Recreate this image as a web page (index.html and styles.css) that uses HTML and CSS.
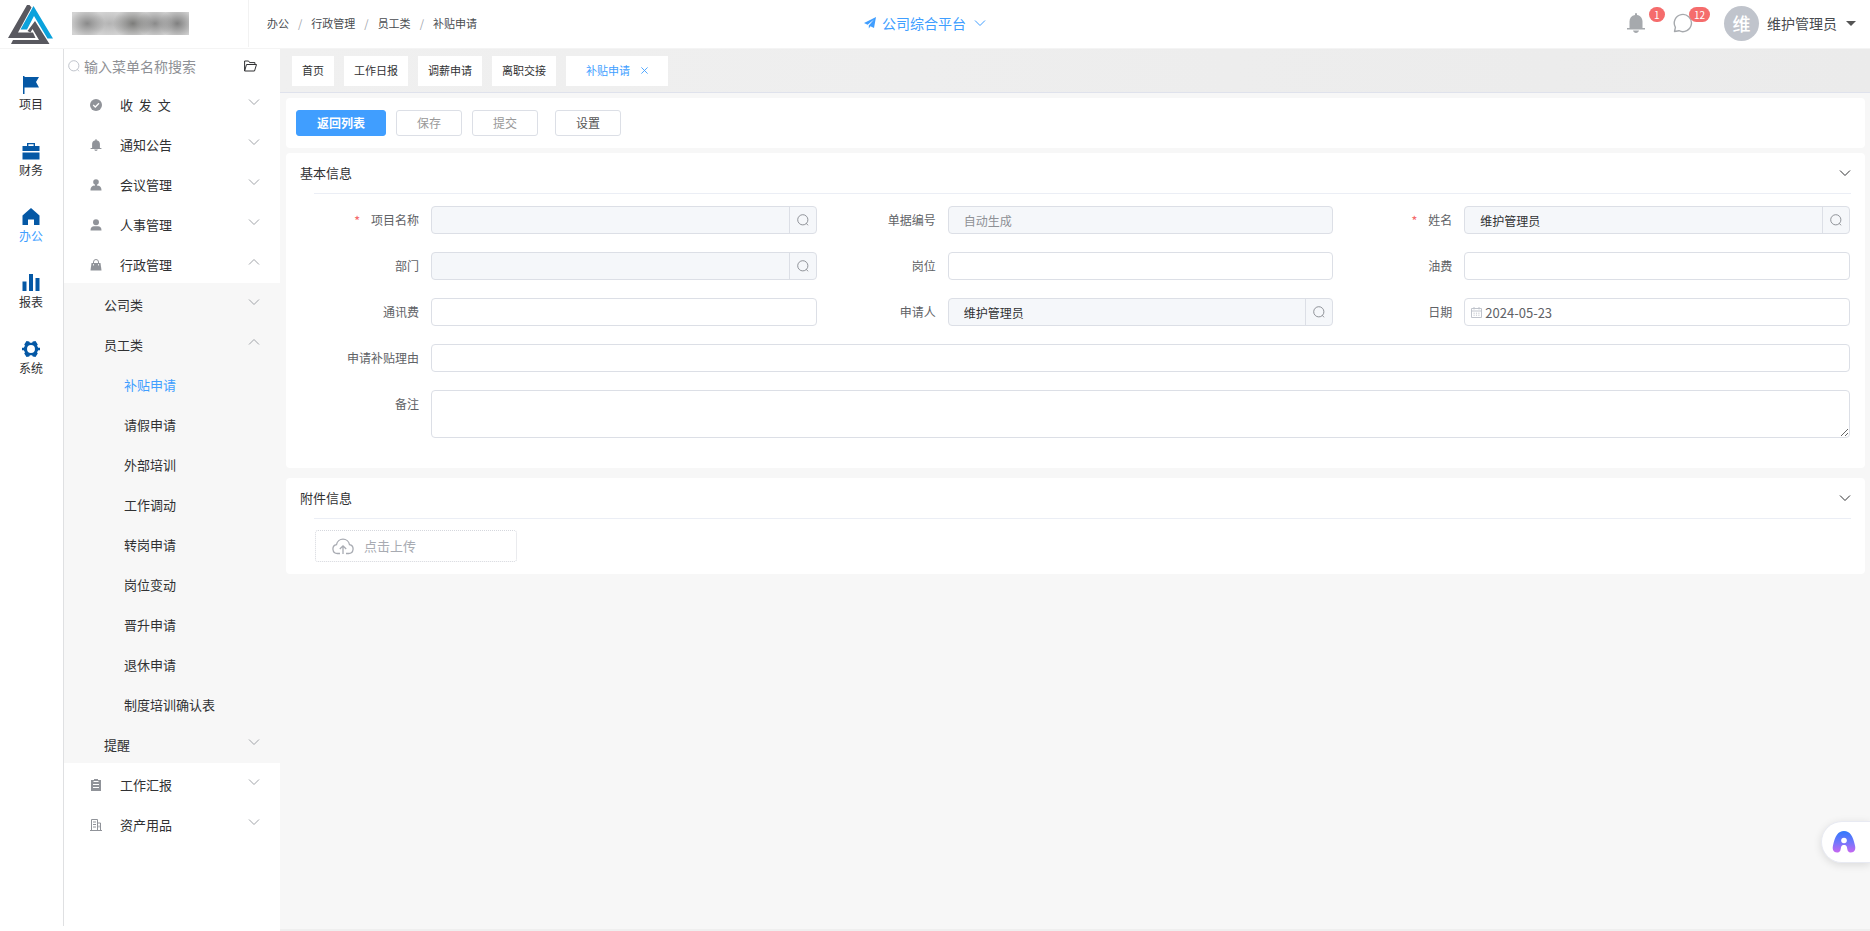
FILE: index.html
```html
<!DOCTYPE html>
<html lang="zh-CN">
<head>
<meta charset="utf-8">
<title>补贴申请</title>
<link rel="stylesheet" href="styles.css">
</head>
<body>
<svg class="defs" aria-hidden="true">
  <symbol id="i-down" viewBox="0 0 12 12"><path d="M1 3.5 6 8.5 11 3.5" fill="none" stroke="currentColor"/></symbol>
  <symbol id="i-up" viewBox="0 0 12 12"><path d="M1 8.5 6 3.5 11 8.5" fill="none" stroke="currentColor"/></symbol>
  <symbol id="i-search" viewBox="0 0 12 12"><circle cx="5.8" cy="5.8" r="5.1" fill="none" stroke="currentColor"/><path d="M9.2 9.2 11 11.300" stroke="currentColor"/></symbol>
  <symbol id="i-bell" viewBox="0 0 18 20"><path d="M8 2V1a1 1 0 0 1 2 0v1c3.600.6 5.500 3.200 5.500 6.500V15H18v1.600H0V15h2.500V8.500C2.500 5.200 4.400 2.600 8 2ZM6 17.600h6c-.4 1.400-1.500 2.400-3 2.400s-2.600-1-3-2.400Z" fill="currentColor"/></symbol>
</svg>
<header class="header">
  <a class="brand" href="#" aria-label="首页">
    <svg class="brand-logo" viewBox="0 0 45 40">
      <path d="M19 0h2.500L23.500 2.500 10 27.500h15l2.500 5.500H0Z" fill="#58585f"/>
      <path d="M27 16 41.500 39H3l2-4h26L24.500 24 22.500 27.500 19.500 26Z" fill="#58585f"/>
      <path d="M25.500 1 45 33.500h-5.500L26 11 19 24.500h-6.500Z" fill="#0ba2dc"/>
    </svg>
    <span class="brand-name"></span>
  </a>
  <nav class="crumbs" aria-label="路径"><span>办公</span><i>/</i><span>行政管理</span><i>/</i><span>员工类</span><i>/</i><span>补贴申请</span></nav>
  <button class="platform" type="button">
    <svg width="12" height="12" viewBox="0 0 12 12"><path d="M12 0 10 11 6.500 9.300 4.800 11.500V8.400L10 2.600 3.600 7.800 0 6Z" fill="currentColor"/></svg>
    公司综合平台
    <svg class="ic12"><use href="#i-down"/></svg>
  </button>
  <div class="user-area">
    <button class="notice" type="button" aria-label="通知"><svg width="18" height="20"><use href="#i-bell"/></svg><span class="badge">1</span></button>
    <button class="notice chat" type="button" aria-label="消息"><svg width="20" height="20" viewBox="0 0 20 20"><path d="M1.500 18.500 2.400 14.300A8.600 8.600 0 1 1 6 17.700Z" fill="none" stroke="currentColor" stroke-width="1.400" stroke-linejoin="round"/></svg><span class="badge">12</span></button>
    <button class="user" type="button"><span class="avatar">维</span>维护管理员<span class="caret"></span></button>
  </div>
</header>
<div class="body">
  <nav class="rail">
    <a href="#"><svg viewBox="0 0 18 18"><path d="M1 0h1.500v1H17l-3 5 3 5.500H2.500V18H1Z"/></svg>项目</a>
    <a href="#"><svg viewBox="0 0 18 18"><path d="M5 1h8v3h4.500v5H.5V4H5Zm1.400 1.300V4h5.200V2.300ZM.5 10.500h17v7H.5Z" fill-rule="evenodd"/></svg>财务</a>
    <a href="#" class="on"><svg viewBox="0 0 18 18"><path d="M9 0 17.500 7.500V17H12v-5.500H6V17H.5V7.500Z"/></svg>办公</a>
    <a href="#"><svg viewBox="0 0 18 18"><path d="M.5 7.500h4V17h-4ZM7 0h4v17H7Zm6.500 4h4v13h-4Z"/></svg>报表</a>
    <a href="#"><svg viewBox="0 0 20 18"><path d="M5 0 8 .6 8.800 2h2.400L12 .6 15 0l2.500 4-.8 1.500 1.300 2h2v3h-2l-1.300 2 .8 1.500-2.500 4-3-.6-.8-1.400H8.800L8 17.400 5 18 2.500 14l.8-1.500-1.300-2H0v-3h2l1.300-2L2.500 4Zm5 4.600a4.400 4.400 0 1 0 0 8.800 4.400 4.400 0 1 0 0-8.800Z" fill-rule="evenodd"/></svg>系统</a>
  </nav>
  <aside class="side">
    <div class="side-search">
      <svg class="ic12"><use href="#i-search"/></svg>
      <input type="text" aria-label="搜索菜单" placeholder="输入菜单名称搜索">
      <button type="button" aria-label="展开"><svg width="13" height="12" viewBox="0 0 13 12"><path d="M.6 11V1h4l1 1.600h5.300V4.500M.6 11 2.500 4.500h10L10.500 11Z" fill="none" stroke="#303133"/></svg></button>
    </div>
    <ul class="menu">
      <li><button type="button"><svg class="mi" viewBox="0 0 12 12"><circle cx="6" cy="6" r="6"/><path d="M3.200 6 5.300 8 9 4.200" fill="none" stroke="#fff" stroke-width="1.300"/></svg><span>收&nbsp; 发&nbsp; 文</span><svg class="chev"><use href="#i-down"/></svg></button></li>
      <li><button type="button"><svg class="mi"><use href="#i-bell"/></svg><span>通知公告</span><svg class="chev"><use href="#i-down"/></svg></button></li>
      <li><button type="button"><svg class="mi" viewBox="0 0 12 12"><circle cx="6" cy="3" r="2.800"/><path d="M5 5h2v1.500c3 .2 4.500 1.500 4.500 5H.5c0-3.500 1.500-4.800 4.500-5Z"/></svg><span>会议管理</span><svg class="chev"><use href="#i-down"/></svg></button></li>
      <li><button type="button"><svg class="mi" viewBox="0 0 12 12"><circle cx="6" cy="3.200" r="3"/><path d="M.5 11.500c0-3 1.500-4.300 3.500-4.300h4c2 0 3.500 1.300 3.500 4.300Z"/></svg><span>人事管理</span><svg class="chev"><use href="#i-down"/></svg></button></li>
      <li><button type="button"><svg class="mi" viewBox="0 0 12 12"><path d="M3.500 5V3a2.500 2.500 0 0 1 5 0v2" fill="none" stroke="currentColor"/><path d="M1.500 4h9l1 7.500H.5Z"/><path d="M3.500 5v1.500M8.500 5v1.500" stroke="#fff" stroke-width=".8"/></svg><span>行政管理</span><svg class="chev"><use href="#i-up"/></svg></button>
        <ul class="submenu">
          <li><button type="button"><span>公司类</span><svg class="chev"><use href="#i-down"/></svg></button></li>
          <li><button type="button"><span>员工类</span><svg class="chev"><use href="#i-up"/></svg></button>
            <ul class="leafs">
              <li><a href="#" class="on">补贴申请</a></li>
              <li><a href="#">请假申请</a></li>
              <li><a href="#">外部培训</a></li>
              <li><a href="#">工作调动</a></li>
              <li><a href="#">转岗申请</a></li>
              <li><a href="#">岗位变动</a></li>
              <li><a href="#">晋升申请</a></li>
              <li><a href="#">退休申请</a></li>
              <li><a href="#">制度培训确认表</a></li>
            </ul>
          </li>
          <li><button type="button"><span>提醒</span><svg class="chev"><use href="#i-down"/></svg></button></li>
        </ul>
      </li>
      <li><button type="button"><svg class="mi" viewBox="0 0 12 12"><path d="M1 1h3V0h4v1h3v11H1Z"/><path d="M3.500 2.500h5M3 5.500h6M3 8.500h6" stroke="#fff"/></svg><span>工作汇报</span><svg class="chev"><use href="#i-down"/></svg></button></li>
      <li><button type="button"><svg class="mi" viewBox="0 0 12 12"><path d="M1.500 11.500V.5h6v11M7.500 4h3v7.500M0 11.500h12M3 3h3M3 5.500h3M3 8h3M9 6.500v2" fill="none" stroke="currentColor"/></svg><span>资产用品</span><svg class="chev"><use href="#i-down"/></svg></button></li>
    </ul>
  </aside>
  <main class="main">
    <nav class="tabs">
      <a href="#">首页</a><a href="#">工作日报</a><a href="#">调薪申请</a><a href="#">离职交接</a>
      <a href="#" class="on">补贴申请<svg width="7" height="7" viewBox="0 0 7 7"><path d="M.4.4 6.600 6.600M6.600.4.4 6.600" stroke="currentColor" stroke-width=".9"/></svg></a>
    </nav>
    <div class="page">
      <div class="card toolbar">
        <button class="btn primary" type="button">返回列表</button>
        <button class="btn" type="button" disabled>保存</button>
        <button class="btn" type="button" disabled>提交</button>
        <button class="btn last" type="button">设置</button>
      </div>
      <section class="card basic">
        <div class="card-head"><h2>基本信息</h2><button type="button" aria-label="折叠"><svg class="ic12"><use href="#i-down"/></svg></button></div>
        <form class="form">
          <div class="field req"><label for="f1">项目名称</label><div class="box ro"><input id="f1" readonly><button type="button" aria-label="选择"><svg class="ic12"><use href="#i-search"/></svg></button></div></div>
          <div class="field"><label for="f2">单据编号</label><div class="box ro"><input id="f2" placeholder="自动生成" readonly></div></div>
          <div class="field req"><label for="f3">姓名</label><div class="box ro"><input id="f3" value="维护管理员" readonly><button type="button" aria-label="选择"><svg class="ic12"><use href="#i-search"/></svg></button></div></div>
          <div class="field"><label for="f4">部门</label><div class="box ro"><input id="f4" readonly><button type="button" aria-label="选择"><svg class="ic12"><use href="#i-search"/></svg></button></div></div>
          <div class="field"><label for="f5">岗位</label><div class="box"><input id="f5"></div></div>
          <div class="field"><label for="f6">油费</label><div class="box"><input id="f6"></div></div>
          <div class="field"><label for="f7">通讯费</label><div class="box"><input id="f7"></div></div>
          <div class="field"><label for="f8">申请人</label><div class="box ro"><input id="f8" value="维护管理员" readonly><button type="button" aria-label="选择"><svg class="ic12"><use href="#i-search"/></svg></button></div></div>
          <div class="field"><label for="f9">日期</label><div class="box date"><svg width="11" height="11" viewBox="0 0 11 11"><path d="M.5 1.500h10v9H.5ZM.5 4h10M3 0v2.500M8 0v2.500" fill="none" stroke="#c0c4cc"/><path d="M2.500 6.200h6M2.500 8.200h6" fill="none" stroke="#c0c4cc" stroke-dasharray="1.200 1.200"/></svg><input id="f9" value="2024-05-23"></div></div>
          <div class="field wide"><label for="f10">申请补贴理由</label><div class="box"><input id="f10"></div></div>
          <div class="field wide"><label for="f11">备注</label><textarea id="f11"></textarea></div>
        </form>
      </section>
      <section class="card files">
        <div class="card-head"><h2>附件信息</h2><button type="button" aria-label="折叠"><svg class="ic12"><use href="#i-down"/></svg></button></div>
        <button class="upload" type="button"><svg width="22" height="17" viewBox="0 0 22 17"><path d="M8 15.500H5.500A4.500 4.500 0 0 1 4.500 6.600a6.600 6.600 0 0 1 13 0A4.500 4.500 0 0 1 16.500 15.500H14M11 16V8M7.800 11 11 7.800 14.200 11" fill="none" stroke="currentColor" stroke-width="1.300"/></svg>点击上传</button>
      </section>
    </div>
  </main>
</div>
<button class="assistant" type="button" aria-label="助手">
  <svg width="24" height="22" viewBox="0 0 24 22"><defs><linearGradient id="ag" x1="0" y1="0" x2="0" y2="1"><stop offset="0" stop-color="#2f78fb"/><stop offset=".55" stop-color="#7576fb"/><stop offset="1" stop-color="#c767f0"/></linearGradient></defs><path d="M12 0C18 0 21 5 23 14.500 24 18.500 22.500 21.500 19 21.500 15.500 21.500 15.500 19 15 16.500 14.600 14.600 13.500 14 12 14s-2.600.6-3 2.500C8.500 19 8.500 21.500 5 21.500 1.500 21.500 0 18.500 1 14.500 3 5 6 0 12 0Z" fill="url(#ag)"/><circle cx="12" cy="9.500" r="2.800" fill="#fff"/></svg>
</button>
</body>
</html>
```

FILE: styles.css
```css
* { box-sizing: border-box; }
body {
  margin: 0;
  height: 100vh;
  display: flex;
  flex-direction: column;
  overflow: hidden;
  background: #fff;
  color: #303133;
  font: 12px/20px "Noto Sans CJK SC", sans-serif;
}
button, input, textarea { font: inherit; color: inherit; margin: 0; padding: 0; border: 0; background: none; outline: 0; }
button { cursor: pointer; }
a { color: inherit; text-decoration: none; }
ul { list-style: none; margin: 0; padding: 0; }
svg { display: block; flex: none; }
.defs { position: absolute; width: 0; height: 0; }
.ic12 { width: 12px; height: 12px; }

.header { position: relative; display: flex; align-items: center; flex: none; height: 49px; padding-bottom: 2px; border-bottom: 1px solid #f4f4f4; }
.brand { display: flex; align-items: center; gap: 19px; width: 249px; height: 48px; padding-left: 8px; border-right: 1px solid #f2f2f2; }
.brand-logo { width: 45px; height: 40px; margin-top: 3px; }
.brand-name {
  width: 117px;
  height: 23px;
  background:
    radial-gradient(ellipse 18px 14px at 13% 50%, #8a8a8a 0, transparent 100%),
    radial-gradient(ellipse 20px 15px at 52% 50%, #7c7c7a 0, transparent 100%),
    radial-gradient(ellipse 18px 14px at 71% 50%, #8a8a8a 0, transparent 100%),
    radial-gradient(ellipse 18px 15px at 90% 50%, #808080 0, transparent 100%),
    radial-gradient(ellipse 22px 12px at 32% 50%, #b4b4b4 0, transparent 100%),
    #d3d3d3;
}
.crumbs { display: flex; gap: 9px; padding-left: 18px; font-size: 11px; color: #484b50; }
.crumbs i { color: #a0a4ac; font-style: normal; }
.platform { position: absolute; left: 50%; top: 13px; transform: translateX(-50%); display: flex; align-items: center; gap: 6px; margin-left: -10px; font-size: 14px; color: #409eff; white-space: nowrap; }
.platform .ic12 { margin-left: 2px; }
.user-area { display: flex; align-items: center; margin-left: auto; padding-right: 14px; }
.notice { position: relative; margin-right: 28px; color: #a6a9ad; }
.notice.chat { margin-right: 31px; }
.badge { position: absolute; left: 22px; top: -6px; min-width: 15px; height: 15px; padding: 0 5px; border-radius: 8px; background: #f56c6c; color: #fff; font-size: 10px; line-height: 15px; }
.chat .badge { left: 16px; }
.user { display: flex; align-items: center; font-size: 14px; color: #484b50; }
.avatar { width: 35px; height: 35px; margin-right: 8px; border-radius: 50%; background: #c0c4cc; color: #fff; font-size: 18px; font-weight: 500; line-height: 34px; }
.caret { margin-left: 9px; border: 5px solid transparent; border-top-color: #555; border-bottom: 0; }

.body { display: flex; flex: 1; min-height: 0; }
.rail { width: 64px; flex: none; margin-bottom: 5px; padding-top: 27px; border-right: 1px solid #dfe0e2; }
.rail a { display: flex; flex-direction: column; align-items: center; height: 66px; padding-right: 1px; }
.rail svg { width: 18px; height: 18px; fill: #0558a5; }
.rail .on { color: #409eff; }

.side { width: 216px; flex: none; overflow: hidden; font-size: 13px; }
.side-search { display: flex; align-items: center; gap: 4px; height: 34px; padding: 0 23px 0 4px; color: #c0c4cc; }
.side-search input { flex: 1; min-width: 0; font-size: 14px; color: #303133; }
.side-search ::placeholder { color: #8e9095; opacity: 1; }
.menu button, .menu a { display: flex; align-items: center; width: 100%; height: 40px; padding: 4px 20px 0 26px; text-align: left; }
.mi { width: 12px; height: 12px; margin-right: 18px; fill: #909399; color: #909399; }
.chev { width: 12px; height: 12px; margin: 0 0 7px auto; color: #a0a3a8; }
.submenu { background: #f7f7f7; }
.menu .submenu button { padding-left: 40px; }
.menu .leafs a { padding-left: 60px; }
.menu .on { color: #409eff; }

.main { flex: 1; min-width: 0; background: #f7f7f7; border-bottom: 2px solid #efefef; }
.tabs { display: flex; gap: 10px; height: 44px; padding: 7px 12px; border-bottom: 1px solid #dfe2ec; background: linear-gradient(90deg, #f0f0f0, #ebebeb); font-size: 11px; }
.tabs a { display: flex; align-items: center; height: 30px; padding: 0 10px 2px; background: #fff; }
.tabs .on { gap: 11px; padding: 0 20px 2px; color: #409eff; }
.page { padding: 5px 5px 0 6px; }
.card { background: #fff; border-radius: 4px; }
.toolbar { display: flex; gap: 10px; padding: 12px 10px; }
.btn { height: 26px; padding: 0 20px; border: 1px solid #dcdfe6; border-radius: 3px; background: #fff; color: #555; line-height: 24px; }
.btn:disabled { color: #999; }
.btn.primary { border-color: #409eff; background: #409eff; color: #fff; font-weight: 700; }
.btn.last { margin-left: 7px; }
.basic { margin-top: 5px; padding-bottom: 30px; }
.card-head { display: flex; align-items: center; justify-content: space-between; height: 41px; margin: 0 14px; border-bottom: 1px solid #ebeef5; border-image: linear-gradient(90deg, transparent 15px, #ebeef5 15px) 1; }
.card-head h2 { margin: 0; font-size: 13px; font-weight: 400; }
.form { display: grid; grid-template-columns: repeat(3, 1fr); row-gap: 18px; padding: 12px 15px 0 14px; color: #606266; }
.field { display: flex; align-items: flex-start; }
.field.wide { grid-column: 1 / -1; }
.field label { width: 131px; flex: none; padding-right: 12px; line-height: 28px; text-align: right; }
.req label::before { content: "*"; margin-right: 11px; color: #f56c6c; font-weight: 500; }
.box { display: flex; align-items: center; flex: 1; min-width: 0; height: 28px; border: 1px solid #dcdfe6; border-radius: 4px; background: #fff; }
.box input { flex: 1; min-width: 0; height: 26px; padding: 0 15px; color: #303133; }
.box ::placeholder { color: #8e9095; opacity: 1; }
.box.ro { background: #f5f7fa; }
.box button { display: flex; align-items: center; justify-content: center; width: 27px; height: 26px; border-left: 1px solid #dcdfe6; color: #909399; }
.box.date { padding-left: 6px; }
.date input { padding: 0 3px; font-size: 13px; color: #606266; }
textarea { flex: 1; height: 48px; border: 1px solid #dcdfe6; border-radius: 4px; background: #fff; resize: vertical; }
.files { margin-top: 10px; padding-bottom: 12px; }
.upload { display: flex; align-items: center; gap: 10px; width: 202px; height: 32px; margin: 11px 0 0 29px; padding-left: 16px; border: 1px dotted #d5d7dd; border-radius: 3px; color: #a8abb2; font-size: 13px; }

.assistant { position: fixed; right: 0; bottom: 68px; display: flex; align-items: center; width: 49px; height: 42px; padding-left: 10px; border: 1px solid #e8eaf2; border-right: 0; border-radius: 21px 0 0 21px; background: #fff; box-shadow: 0 2px 8px rgba(0, 0, 0, .12); }
```
